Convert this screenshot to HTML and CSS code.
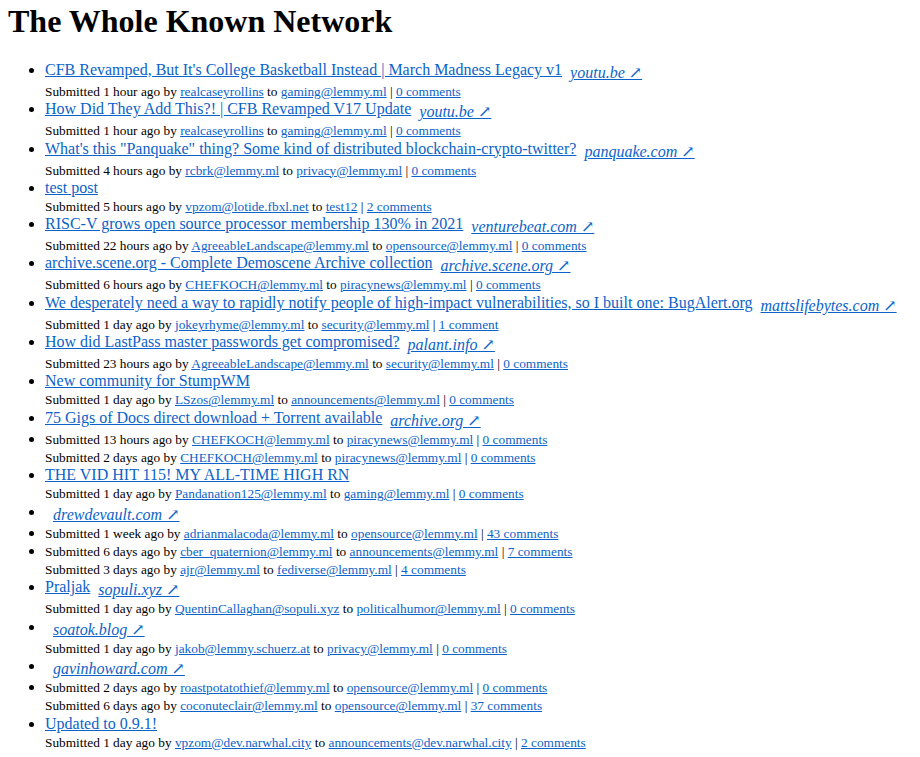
FILE: index.html
```html
<!DOCTYPE html>
<html lang="en">
<head>
    <meta charset="UTF-8">
    <meta name="viewport" content="width=device-width, initial-scale=1.0">
    <title>The Whole Known Network</title>
    <link rel="stylesheet" href="styles.css">
</head>
<body>
    <h1>The Whole Known Network</h1>

    <ul class="posts">
        <li>
            <div class="head"><a class="title" href="#">CFB Revamped, But It's College Basketball Instead | March Madness Legacy v1</a><a class="domain" href="#">youtu.be ↗</a></div>
            <div class="meta"><small>Submitted 1 hour ago by <a href="#">realcaseyrollins</a> to <a href="#">gaming@lemmy.ml</a> | <a href="#">0 comments</a></small></div>
        </li>
        <li>
            <div class="head"><a class="title" href="#">How Did They Add This?! | CFB Revamped V17 Update</a><a class="domain" href="#">youtu.be ↗</a></div>
            <div class="meta"><small>Submitted 1 hour ago by <a href="#">realcaseyrollins</a> to <a href="#">gaming@lemmy.ml</a> | <a href="#">0 comments</a></small></div>
        </li>
        <li>
            <div class="head"><a class="title" href="#">What's this "Panquake" thing? Some kind of distributed blockchain-crypto-twitter?</a><a class="domain" href="#">panquake.com ↗</a></div>
            <div class="meta"><small>Submitted 4 hours ago by <a href="#">rcbrk@lemmy.ml</a> to <a href="#">privacy@lemmy.ml</a> | <a href="#">0 comments</a></small></div>
        </li>
        <li>
            <div class="head"><a class="title" href="#">test post</a></div>
            <div class="meta"><small>Submitted 5 hours ago by <a href="#">vpzom@lotide.fbxl.net</a> to <a href="#">test12</a> | <a href="#">2 comments</a></small></div>
        </li>
        <li>
            <div class="head"><a class="title" href="#">RISC-V grows open source processor membership 130% in 2021</a><a class="domain" href="#">venturebeat.com ↗</a></div>
            <div class="meta"><small>Submitted 22 hours ago by <a href="#">AgreeableLandscape@lemmy.ml</a> to <a href="#">opensource@lemmy.ml</a> | <a href="#">0 comments</a></small></div>
        </li>
        <li>
            <div class="head"><a class="title" href="#">archive.scene.org - Complete Demoscene Archive collection</a><a class="domain" href="#">archive.scene.org ↗</a></div>
            <div class="meta"><small>Submitted 6 hours ago by <a href="#">CHEFKOCH@lemmy.ml</a> to <a href="#">piracynews@lemmy.ml</a> | <a href="#">0 comments</a></small></div>
        </li>
        <li>
            <div class="head"><a class="title" href="#">We desperately need a way to rapidly notify people of high-impact vulnerabilities, so I built one: BugAlert.org</a><a class="domain" href="#">mattslifebytes.com ↗</a></div>
            <div class="meta"><small>Submitted 1 day ago by <a href="#">jokeyrhyme@lemmy.ml</a> to <a href="#">security@lemmy.ml</a> | <a href="#">1 comment</a></small></div>
        </li>
        <li>
            <div class="head"><a class="title" href="#">How did LastPass master passwords get compromised?</a><a class="domain" href="#">palant.info ↗</a></div>
            <div class="meta"><small>Submitted 23 hours ago by <a href="#">AgreeableLandscape@lemmy.ml</a> to <a href="#">security@lemmy.ml</a> | <a href="#">0 comments</a></small></div>
        </li>
        <li>
            <div class="head"><a class="title" href="#">New community for StumpWM</a></div>
            <div class="meta"><small>Submitted 1 day ago by <a href="#">LSzos@lemmy.ml</a> to <a href="#">announcements@lemmy.ml</a> | <a href="#">0 comments</a></small></div>
        </li>
        <li>
            <div class="head"><a class="title" href="#">75 Gigs of Docs direct download + Torrent available</a><a class="domain" href="#">archive.org ↗</a></div>
        </li>
        <li>
            <div class="meta"><small>Submitted 13 hours ago by <a href="#">CHEFKOCH@lemmy.ml</a> to <a href="#">piracynews@lemmy.ml</a> | <a href="#">0 comments</a></small></div>
            <div class="meta"><small>Submitted 2 days ago by <a href="#">CHEFKOCH@lemmy.ml</a> to <a href="#">piracynews@lemmy.ml</a> | <a href="#">0 comments</a></small></div>
        </li>
        <li>
            <div class="head"><a class="title" href="#">THE VID HIT 115! MY ALL-TIME HIGH RN</a></div>
            <div class="meta"><small>Submitted 1 day ago by <a href="#">Pandanation125@lemmy.ml</a> to <a href="#">gaming@lemmy.ml</a> | <a href="#">0 comments</a></small></div>
        </li>
        <li>
            <div class="head"><a class="domain" href="#">drewdevault.com ↗</a></div>
        </li>
        <li>
            <div class="meta"><small>Submitted 1 week ago by <a href="#">adrianmalacoda@lemmy.ml</a> to <a href="#">opensource@lemmy.ml</a> | <a href="#">43 comments</a></small></div>
        </li>
        <li>
            <div class="meta"><small>Submitted 6 days ago by <a href="#">cber_quaternion@lemmy.ml</a> to <a href="#">announcements@lemmy.ml</a> | <a href="#">7 comments</a></small></div>
            <div class="meta"><small>Submitted 3 days ago by <a href="#">ajr@lemmy.ml</a> to <a href="#">fediverse@lemmy.ml</a> | <a href="#">4 comments</a></small></div>
        </li>
        <li>
            <div class="head"><a class="title" href="#">Praljak</a><a class="domain" href="#">sopuli.xyz ↗</a></div>
            <div class="meta"><small>Submitted 1 day ago by <a href="#">QuentinCallaghan@sopuli.xyz</a> to <a href="#">politicalhumor@lemmy.ml</a> | <a href="#">0 comments</a></small></div>
        </li>
        <li>
            <div class="head"><a class="domain" href="#">soatok.blog ↗</a></div>
            <div class="meta"><small>Submitted 1 day ago by <a href="#">jakob@lemmy.schuerz.at</a> to <a href="#">privacy@lemmy.ml</a> | <a href="#">0 comments</a></small></div>
        </li>
        <li>
            <div class="head"><a class="domain" href="#">gavinhoward.com ↗</a></div>
        </li>
        <li>
            <div class="meta"><small>Submitted 2 days ago by <a href="#">roastpotatothief@lemmy.ml</a> to <a href="#">opensource@lemmy.ml</a> | <a href="#">0 comments</a></small></div>
            <div class="meta"><small>Submitted 6 days ago by <a href="#">coconuteclair@lemmy.ml</a> to <a href="#">opensource@lemmy.ml</a> | <a href="#">37 comments</a></small></div>
        </li>
        <li>
            <div class="head"><a class="title" href="#">Updated to 0.9.1!</a></div>
            <div class="meta"><small>Submitted 1 day ago by <a href="#">vpzom@dev.narwhal.city</a> to <a href="#">announcements@dev.narwhal.city</a> | <a href="#">2 comments</a></small></div>
        </li>
    </ul>
</body>
</html>
```

FILE: styles.css
```css
body {
    margin: 3px 8px 8px;
    font-family: "Liberation Serif", "Times New Roman", serif;
    font-size: 16px;
    color: #000;
    background: #fff;
}

a {
    color: #0b63c9;
}

h1 {
    font-size: 32px;
    margin: 0 0 21px;
}

.posts {
    margin: 0;
    padding-left: 37px;
}

.meta {
    line-height: 18.3px;
}

.meta small {
    line-height: 1;
}

.domain {
    font-family: "Liberation Serif", "DejaVu Serif", serif;
    font-style: italic;
    margin-left: 8px;
    vertical-align: -3px;
}
```
